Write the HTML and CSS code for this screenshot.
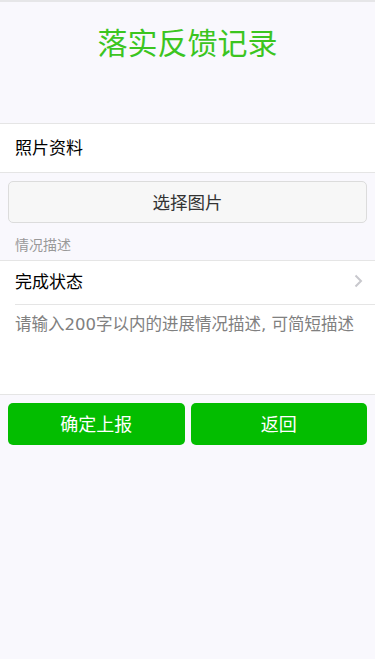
FILE: index.html
```html
<!DOCTYPE html>
<html lang="zh">
<head>
<meta charset="utf-8">
<meta name="viewport" content="width=device-width, initial-scale=1">
<title>落实反馈记录</title>
<link rel="stylesheet" href="styles.css">
</head>
<body>
<div class="page">
  <header class="hd">
    <h1 class="title">落实反馈记录</h1>
  </header>
  <div class="cells">
    <div class="cell">照片资料</div>
  </div>
  <div class="pick-wrap">
    <button class="btn-default">选择图片</button>
  </div>
  <div class="cells-title">情况描述</div>
  <div class="cells">
    <div class="cell cell-access">
      <span class="cell-bd">完成状态</span>
      <svg class="chev" width="9" height="14" viewBox="0 0 9 14"><path d="M1.5 1.5 L7 7 L1.5 12.5" fill="none" stroke="#c8c8cd" stroke-width="2"/></svg>
    </div>
    <div class="cell cell-textarea">
      <textarea class="textarea" placeholder="请输入200字以内的进展情况描述, 可简短描述" rows="3"></textarea>
    </div>
  </div>
  <div class="btn-area">
    <button class="btn-primary">确定上报</button>
    <button class="btn-primary">返回</button>
  </div>
</div>
</body>
</html>
```
FILE: styles.css
```css
* { box-sizing: border-box; }
html, body {
  margin: 0;
  padding: 0;
  background: #f9f8fd;
  font-family: "Noto Sans CJK SC", "Noto Sans", sans-serif;
  color: #000;
}
.page {
  border-top: 2px solid #e6e6e8;
  min-height: 659px;
}
.hd {
  height: 121px;
  display: flex;
  justify-content: center;
  padding-top: 18px;
}
.title {
  margin: 0;
  font-size: 30px;
  font-weight: 400;
  color: #3cc51f;
  line-height: 42px;
}
.cells {
  background: #fff;
  border-top: 1px solid #e5e5e5;
  border-bottom: 1px solid #e5e5e5;
}
.cell {
  display: flex;
  align-items: center;
  padding: 0 15px 3px;
  height: 48px;
  font-size: 17px;
  line-height: 24px;
}
.cell-access {
  height: 43px;
  justify-content: space-between;
  padding-right: 12px;
}
.cell-bd { flex: 1; }
.chev { display: block; }
.cell-textarea {
  margin-left: 15px;
  padding: 7px 0 0 0;
  border-top: 1px solid #e5e5e5;
  align-items: flex-start;
  height: 90px;
}
.textarea {
  width: 100%;
  border: 0;
  resize: none;
  outline: 0;
  font-family: "DejaVu Sans", "Noto Sans CJK SC", sans-serif;
  font-size: 16.5px;
  line-height: 26px;
  padding: 0;
  color: #000;
  background: transparent;
}
.textarea::placeholder { color: #808080; }
.pick-wrap { padding: 8px 8px 0; }
.btn-default {
  display: block;
  width: 100%;
  height: 42px;
  border: 1px solid #dcdcdc;
  border-radius: 5px;
  background: #f7f7f7;
  font-family: inherit;
  font-size: 17.5px;
  color: #333;
  padding-bottom: 3px;
}
.cells-title {
  padding: 11px 15px 6px;
  font-size: 14px;
  color: #999;
  line-height: 20px;
}
.btn-area {
  display: flex;
  gap: 6px;
  padding: 8px 8px;
}
.btn-primary {
  flex: 1;
  height: 42px;
  border: 0;
  border-radius: 5px;
  background: #03bd00;
  color: #fff;
  font-family: inherit;
  font-size: 18px;
  padding-bottom: 3px;
}
```
